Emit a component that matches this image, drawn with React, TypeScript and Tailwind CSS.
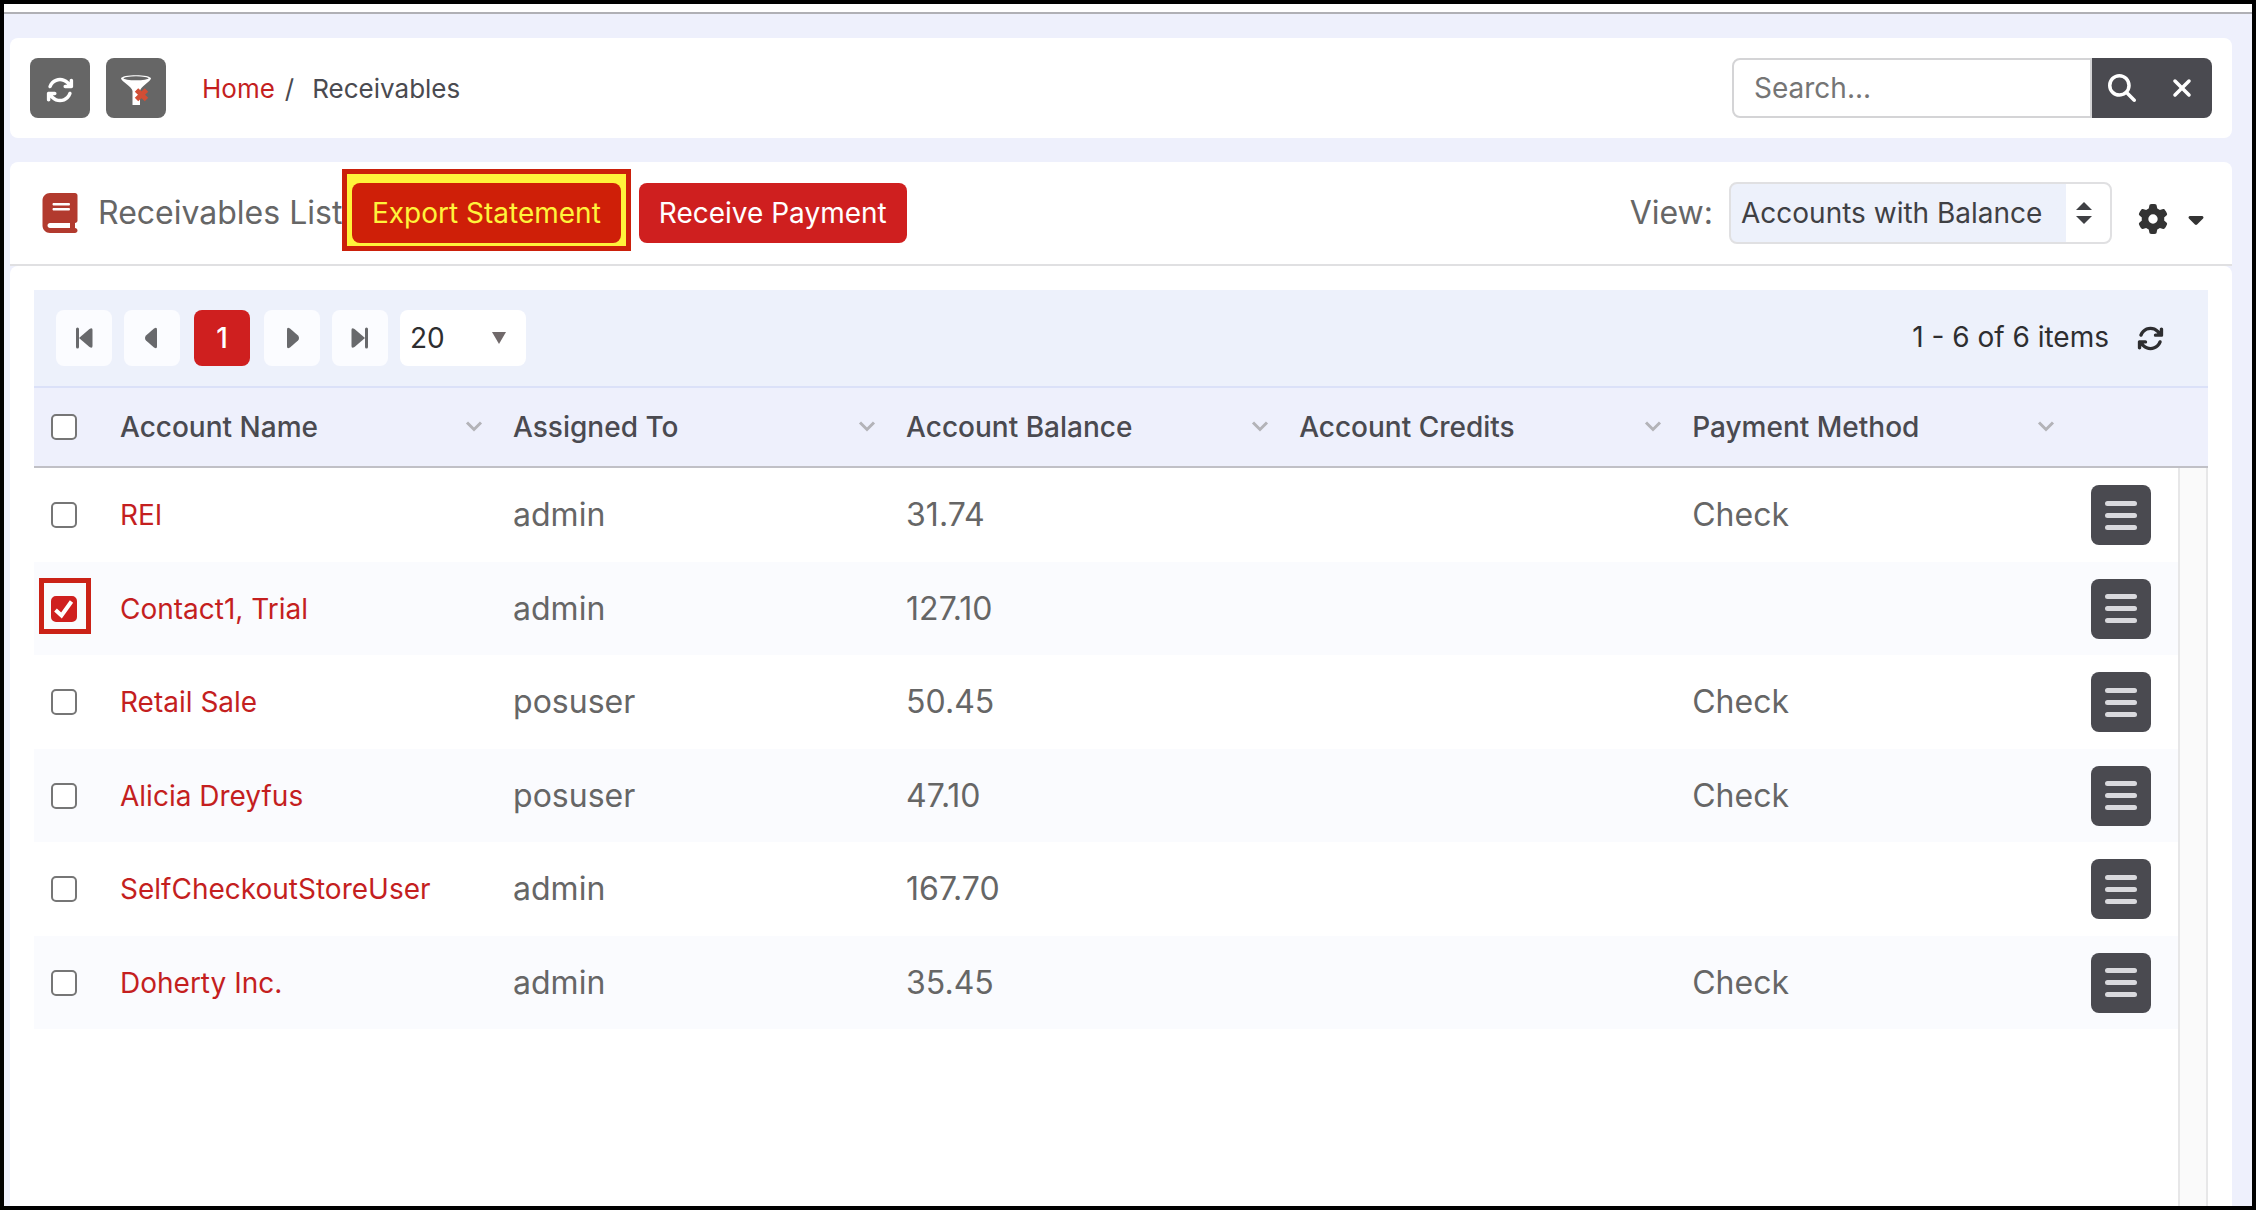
import { useState } from 'react';
import { FaArrowsRotate, FaBook, FaCaretDown, FaGear, FaMagnifyingGlass, FaXmark } from 'react-icons/fa6';

type Account = {
    name: string;
    assignedTo: string;
    balance: string;
    credits: string;
    method: string;
};

const accounts: Account[] = [
    { name: 'REI', assignedTo: 'admin', balance: '31.74', credits: '', method: 'Check' },
    { name: 'Contact1, Trial', assignedTo: 'admin', balance: '127.10', credits: '', method: '' },
    { name: 'Retail Sale', assignedTo: 'posuser', balance: '50.45', credits: '', method: 'Check' },
    { name: 'Alicia Dreyfus', assignedTo: 'posuser', balance: '47.10', credits: '', method: 'Check' },
    { name: 'SelfCheckoutStoreUser', assignedTo: 'admin', balance: '167.70', credits: '', method: '' },
    { name: 'Doherty Inc.', assignedTo: 'admin', balance: '35.45', credits: '', method: 'Check' },
];

const columns = ['Account Name', 'Assigned To', 'Account Balance', 'Account Credits', 'Payment Method'];

function FunnelIcon() {
    return (
        <svg viewBox="0 0 32 32" className="size-8" aria-hidden="true">
            <path d="M1 4.5C1 0 31 0 31 4.5C31 7 20 13 20 17V31H12.500V17C12.500 13 1 7 1 4.500Z" fill="#fff" />
            <ellipse cx="16" cy="4.300" rx="12.500" ry="2" fill="#666" />
            <path d="M16.500 16l10 9.500M26.500 16l-10 9.500" stroke="#d24e35" strokeWidth="5" />
        </svg>
    );
}

function ChevronIcon() {
    return (
        <svg viewBox="0 0 18 12" className="h-3 w-[18px]" aria-hidden="true">
            <path d="M2 1.500l7 7 7-7" fill="none" stroke="#b3b3b8" strokeWidth="3" />
        </svg>
    );
}

function PagerArrow({ end, flip }: { end?: boolean; flip?: boolean }) {
    return (
        <svg viewBox="0 0 20 22" className={flip ? 'h-[22px] w-5 -scale-x-100' : 'h-[22px] w-5'} aria-hidden="true">
            {end && <path d="M3.500 2v18" stroke="#68696c" strokeWidth="3" strokeLinecap="round" />}
            <path
                d={end ? 'M5 11L15.500 2q3-2 3 1V19q0 3-3 1Z' : 'M3 11Q3 9.500 4 8.500L12 1.500q3-2 3 1V19.500q0 3-3 1L4 13.500Q3 12.500 3 11Z'}
                fill="#68696c"
            />
        </svg>
    );
}

function Checkbox({ label, checked, onChange }: { label: string; checked: boolean; onChange: () => void }) {
    return (
        <span className="relative block size-[26px]">
            <input
                type="checkbox"
                aria-label={label}
                checked={checked}
                onChange={onChange}
                className="block size-[26px] appearance-none rounded-[5px] border-2 border-[#767676] bg-white checked:border-[#cf1f1f] checked:bg-[#cf1f1f]"
            />
            {checked && (
                <svg viewBox="0 0 26 26" className="pointer-events-none absolute inset-0 size-[26px]" aria-hidden="true">
                    <path d="M4.500 14l6 5.500L20.500 5.500" fill="none" stroke="#fff" strokeWidth="4" />
                </svg>
            )}
        </span>
    );
}

export default function App() {
    const [selected, setSelected] = useState<string[]>(['Contact1, Trial']);
    const [search, setSearch] = useState('');

    const toggle = (name: string) => {
        setSelected(selected.includes(name) ? selected.filter((n) => n !== name) : [...selected, name]);
    };

    const allSelected = selected.length === accounts.length;
    const toggleAll = () => setSelected(allSelected ? [] : accounts.map((a) => a.name));

    const toolButtonClass = "flex size-[60px] items-center justify-center rounded-lg bg-[#666] pt-1 text-white";
    const redButtonClass = "h-[60px] rounded-lg px-5 text-[28px]";
    const pagerClass = "flex size-14 items-center justify-center rounded-lg bg-[#fbfcff]";

    return (
        <div className="flex min-h-screen flex-col border-4 border-black bg-[#eef0fc] font-['Inter',sans-serif] text-[28px] text-[#4a4a50]">
            <div className="h-2.5 border-b-2 border-[#b0b0b5] bg-white" />

            <div className="flex grow flex-col pt-6 pr-5 pl-1.5">
                {/* Breadcrumb bar */}
                <header className="mb-6 flex h-[100px] items-center rounded-lg bg-white px-5">
                    <button type="button" aria-label="Refresh" className={toolButtonClass}>
                        <FaArrowsRotate className="size-7" />
                    </button>
                    <button type="button" aria-label="Clear filter" className={`${toolButtonClass} ml-4`}>
                        <FunnelIcon />
                    </button>
                    <nav className="ml-9 flex text-[26px]">
                        <a href="#" className="text-[#c41f1f]">Home</a>
                        <span className="mr-[18px] ml-2.5">/</span>
                        <span>Receivables</span>
                    </nav>
                    <div className="ml-auto flex h-[60px]">
                        <input
                            type="text"
                            aria-label="Search"
                            placeholder="Search..."
                            value={search}
                            onChange={(e) => setSearch(e.target.value)}
                            className="w-[360px] rounded-l-lg border-2 border-[#d4d4d6] bg-white px-5 outline-none placeholder:text-[#757575]"
                        />
                        <button type="button" aria-label="Run search" className="flex w-[60px] items-center justify-center bg-[#4a4a50] text-white">
                            <FaMagnifyingGlass className="size-7" />
                        </button>
                        <button type="button" aria-label="Clear search" onClick={() => setSearch('')} className="flex w-[60px] items-center justify-center rounded-r-lg bg-[#4a4a50] text-white">
                            <FaXmark className="size-7" />
                        </button>
                    </div>
                </header>

                {/* Title bar */}
                <div className="flex h-[104px] items-center rounded-t-lg border-b-2 border-[#e0e0e2] bg-white pr-6 pl-8">
                    <FaBook className="h-10 w-9 text-[#b23a2e]" />
                    <h1 className="ml-5 w-[254px] text-[32px] whitespace-nowrap text-[#666]">Receivables List</h1>
                    <div className="relative">
                        <div className="absolute -inset-x-2.5 -top-3.5 -bottom-2 border-[5px] border-[#cb200b] bg-[#fff33b]" />
                        <button type="button" className={`${redButtonClass} relative bg-[#cf1f08] text-[#fff33b]`}>Export Statement</button>
                    </div>
                    <button type="button" className={`${redButtonClass} ml-[18px] bg-[#cf1f1f] text-white`}>Receive Payment</button>

                    <label htmlFor="view" className="ml-auto text-[32px] text-[#666]">View:</label>
                    <div className="relative ml-4">
                        <select id="view" className="h-[62px] w-[383px] appearance-none rounded-lg border-2 border-[#e0e0e2] bg-linear-to-r from-[#edf1fb] from-[335px] to-white to-[335px] pl-2.5 text-[#3f4044]">
                            <option>Accounts with Balance</option>
                        </select>
                        <svg viewBox="0 0 16 22" className="pointer-events-none absolute top-5 right-5 h-[22px] w-4" aria-hidden="true">
                            <path d="M8 0l8 8H0zM8 22l8-8H0z" fill="#3f4044" />
                        </svg>
                    </div>
                    <button type="button" aria-label="Settings" className="mt-3 ml-[26px] flex items-center gap-4 text-[#333]">
                        <FaGear className="size-[30px]" />
                        <FaCaretDown className="size-6" />
                    </button>
                </div>

                <main className="flex grow flex-col rounded-t-lg bg-white px-6 pt-6">
                    {/* Pager */}
                    <div className="flex h-[98px] items-center border-b-2 border-[#dbe1f8] bg-[#edf1fb] pr-11 pl-[22px]">
                        <div className="flex items-center gap-3">
                            <button type="button" aria-label="First page" className={pagerClass}><PagerArrow end /></button>
                            <button type="button" aria-label="Previous page" className={pagerClass}><PagerArrow /></button>
                            <button type="button" className="mx-0.5 size-14 rounded-lg bg-[#cf1f1f] font-medium text-white">1</button>
                            <button type="button" aria-label="Next page" className={pagerClass}><PagerArrow flip /></button>
                            <button type="button" aria-label="Last page" className={pagerClass}><PagerArrow end flip /></button>
                        </div>
                        <div className="relative ml-3">
                            <select aria-label="Rows per page" className="h-14 w-[126px] appearance-none rounded-lg bg-white pl-2.5 text-[#2e2e30]">
                                <option>20</option>
                            </select>
                            <svg viewBox="0 0 14 12" className="pointer-events-none absolute top-[22px] right-5 h-3 w-3.5" aria-hidden="true">
                                <path d="M0 0h14L7 12z" fill="#70696a" />
                            </svg>
                        </div>
                        <span className="mb-0.5 ml-auto text-[#2e2e30]">1 - 6 of 6 items</span>
                        <button type="button" aria-label="Reload list" className="ml-7 text-[#2e2e30]">
                            <FaArrowsRotate className="size-[27px]" />
                        </button>
                    </div>

                    <div className="relative flex grow flex-col">
                        {/* Scroll track beside the rows */}
                        <div className="absolute top-20 right-0 bottom-0 w-[30px] border-x-2 border-[#e7e7e8] bg-[#fafafa]" />
                        <table className="w-full table-fixed border-separate border-spacing-0 text-left">
                            <colgroup>
                                <col className="w-[76px]" />
                                {columns.map((column) => (
                                    <col key={column} className="w-[18.08%]" />
                                ))}
                                <col />
                                <col className="w-[30px]" />
                            </colgroup>
                            <thead className="bg-[#eef0fc]">
                                <tr className="h-20">
                                    <th className="border-b-2 border-[#c0c0c6] pl-[17px]">
                                        <Checkbox label="Select all" checked={allSelected} onChange={toggleAll} />
                                    </th>
                                    {columns.map((column) => (
                                        <th key={column} className="border-b-2 border-[#c0c0c6] pr-5 pl-2.5 font-medium">
                                            <div className="flex items-center justify-between whitespace-nowrap">
                                                {column}
                                                <ChevronIcon />
                                            </div>
                                        </th>
                                    ))}
                                    <th colSpan={2} className="border-b-2 border-[#c0c0c6]" />
                                </tr>
                            </thead>
                            <tbody>
                                {accounts.map((account) => (
                                    <tr key={account.name} className="text-[32px] text-[#666] odd:h-[94px] even:h-[93px] [&:nth-child(even)>td:not(:last-child)]:bg-[#fafbfe]">
                                        <td className="pl-[17px]">
                                            <div className="relative w-[26px]">
                                                <Checkbox label={`Select ${account.name}`} checked={selected.includes(account.name)} onChange={() => toggle(account.name)} />
                                                {account.name === 'Contact1, Trial' && (
                                                    <div className="pointer-events-none absolute -top-[18px] -right-3.5 -bottom-3 -left-3 border-[5px] border-[#cb2217]" />
                                                )}
                                            </div>
                                        </td>
                                        <td className="pl-2.5">
                                            <a href="#" className="block text-[28px] text-[#c41f1f]">{account.name}</a>
                                        </td>
                                        <td className="pl-2.5">{account.assignedTo}</td>
                                        <td className="pl-2.5">{account.balance}</td>
                                        <td className="pl-2.5">{account.credits}</td>
                                        <td className="pl-2.5">{account.method}</td>
                                        <td>
                                            <button type="button" aria-label={`Actions for ${account.name}`} className="mr-[27px] ml-auto flex size-[60px] flex-col items-center justify-center gap-[7px] rounded-lg bg-[#4a4a50]">
                                                <span className="h-[5px] w-8 rounded-full bg-[#d9d9dd]" />
                                                <span className="h-[5px] w-8 rounded-full bg-[#d9d9dd]" />
                                                <span className="h-[5px] w-8 rounded-full bg-[#d9d9dd]" />
                                            </button>
                                        </td>
                                        <td />
                                    </tr>
                                ))}
                            </tbody>
                        </table>
                    </div>
                </main>
            </div>
        </div>
    );
}
